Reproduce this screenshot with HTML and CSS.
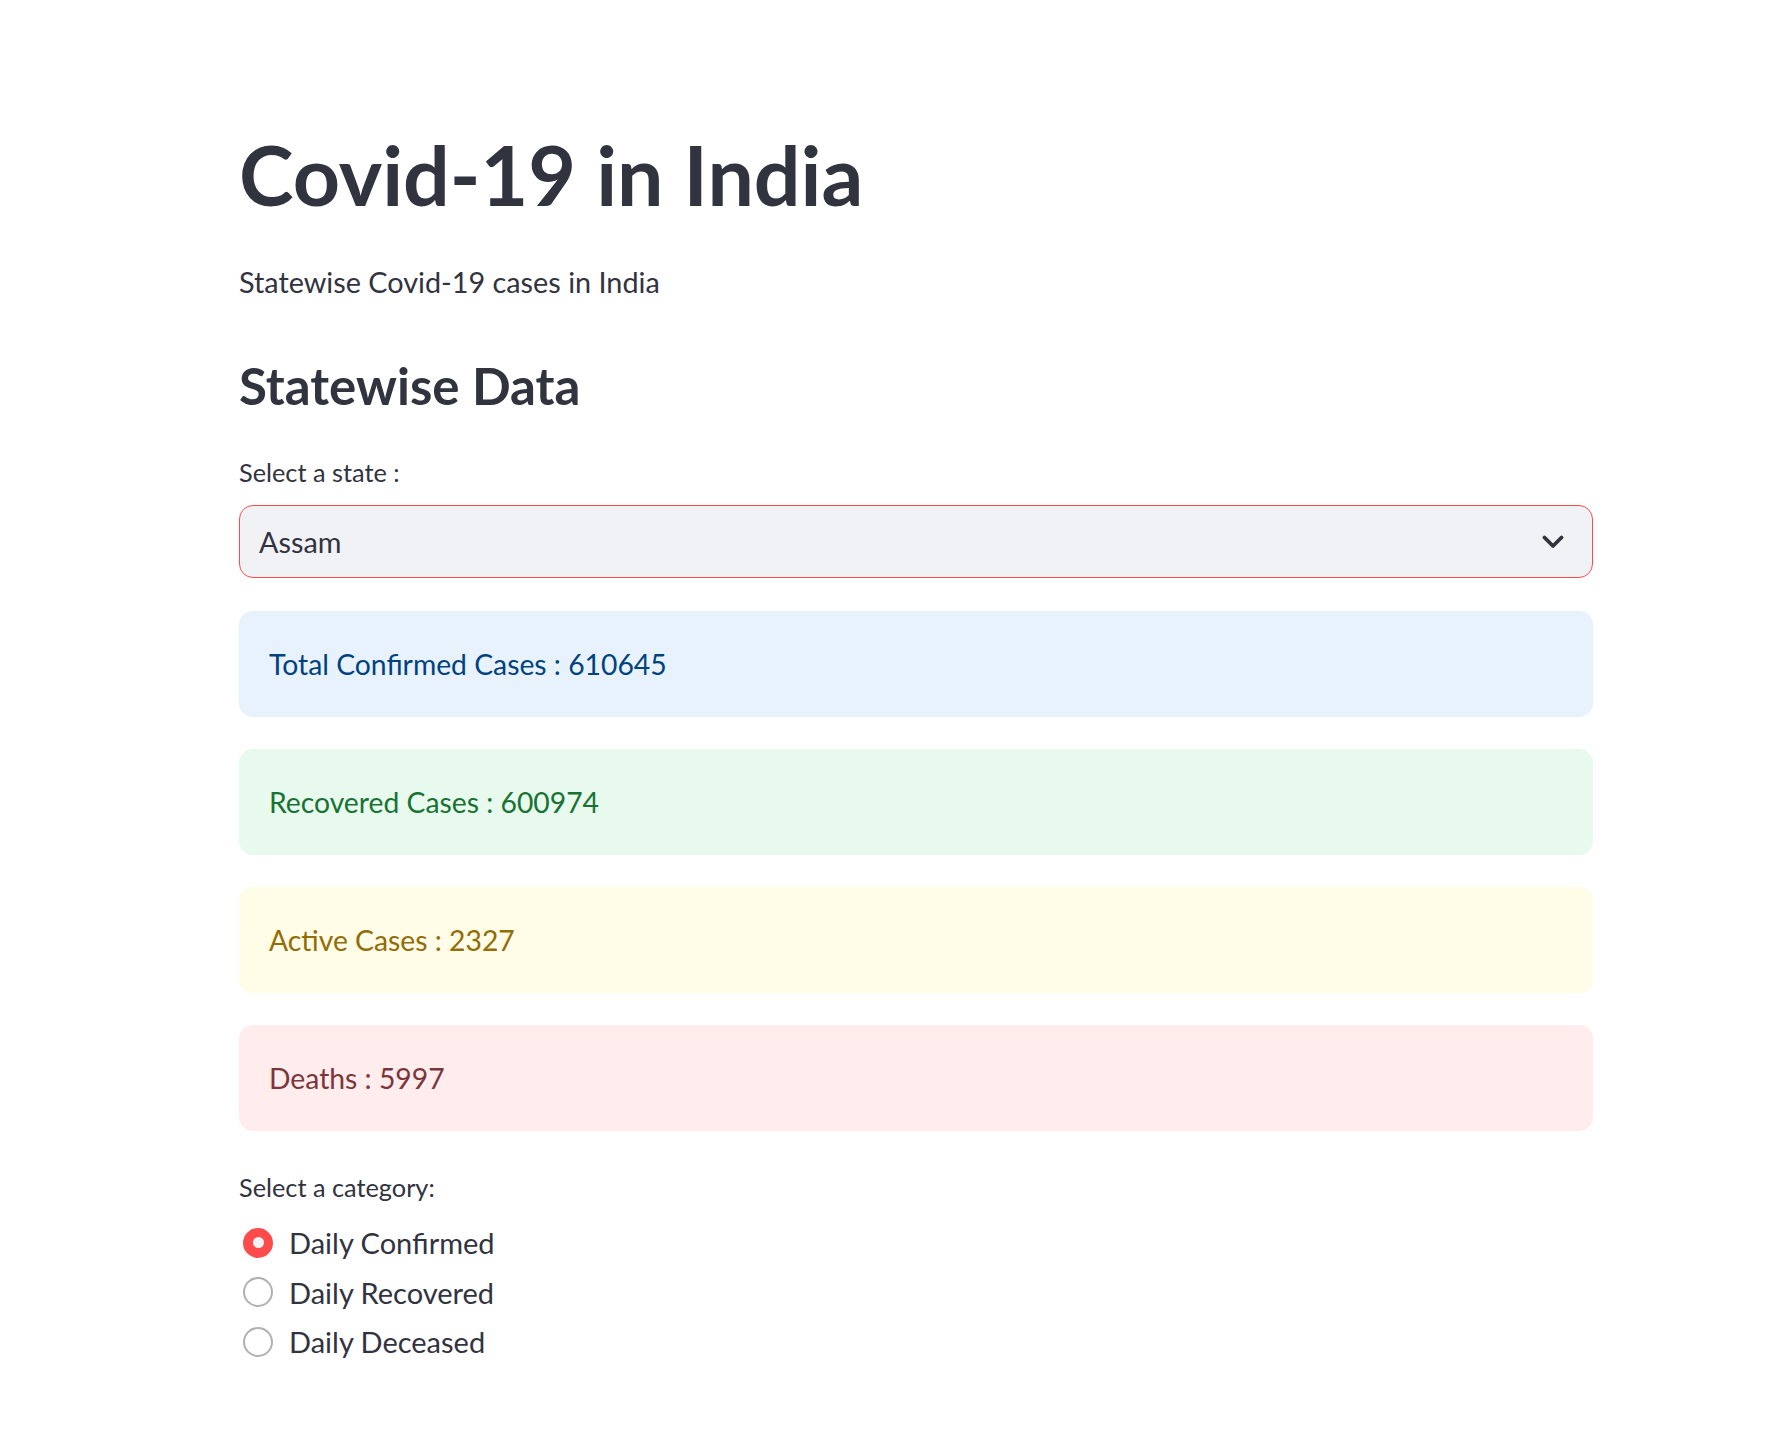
FILE: index.html
```html
<!DOCTYPE html>
<html lang="en">
<head>
<meta charset="utf-8">
<title>Covid-19 in India</title>
<link rel="stylesheet" href="styles.css">
</head>
<body>
<main class="main">
  <h1 class="title">Covid-19 in India</h1>
  <p class="subtitle">Statewise Covid-19 cases in India</p>
  <h2 class="header">Statewise Data</h2>
  <div class="label label-state">Select a state :</div>
  <div class="select">
    <span class="select-value">Assam</span>
    <svg class="chevron" width="22" height="14" viewBox="0 0 22 14" aria-hidden="true">
      <path d="M2.5 2.5 L11 11 L19.5 2.5" fill="none" stroke="#31333F" stroke-width="3.8" stroke-linecap="round" stroke-linejoin="round"/>
    </svg>
  </div>
  <div class="alert alert-info alert-first">Total Confirmed Cases : 610645</div>
  <div class="alert alert-success">Recovered Cases : 600974</div>
  <div class="alert alert-warning">Active Cases : 2327</div>
  <div class="alert alert-error">Deaths : 5997</div>
  <div class="label label-category">Select a category:</div>
  <div class="radios">
    <div class="radio-row"><span class="radio radio-on"><span class="radio-dot"></span></span><span class="radio-label">Daily Confirmed</span></div>
    <div class="radio-row"><span class="radio"></span><span class="radio-label">Daily Recovered</span></div>
    <div class="radio-row"><span class="radio"></span><span class="radio-label">Daily Deceased</span></div>
  </div>
</main>
</body>
</html>
```

FILE: styles.css
```css
* { box-sizing: border-box; }
html, body { margin: 0; padding: 0; background: #ffffff; }
body {
  font-family: Lato, "Noto Sans", "Liberation Sans", sans-serif;
  color: #31333F;
}
.main {
  width: 1354px;
  margin-left: 239px;
  padding-top: 125px;
  display: flex;
  flex-direction: column;
}
.title {
  margin: 0;
  font-size: 82.4px;
  line-height: 100px;
  font-weight: 700;
  height: 100px;
}
.subtitle {
  margin: 34px 0 0 0;
  font-size: 28.8px;
  line-height: 47px;
  height: 47px;
}
.header {
  margin: 40px 0 0 0;
  font-size: 51px;
  line-height: 80px;
  height: 80px;
  font-weight: 700;
}
.label {
  font-size: 25.3px;
  line-height: 40px;
  height: 40px;
}
.label-state { margin-top: 26px; }
.select {
  margin-top: 13px;
  height: 73px;
  background: #F0F2F6;
  border: 1px solid #FF4B4B;
  border-radius: 14px;
  display: flex;
  align-items: center;
  justify-content: space-between;
  padding: 0 28px 0 19px;
}
.select-value { font-size: 28.8px; }
.chevron { display: block; }
.alert {
  margin-top: 32px;
  height: 106px;
  border-radius: 14px;
  padding: 0 30px;
  display: flex;
  align-items: center;
  font-size: 28.3px;
}
.alert-first { margin-top: 33px; }
.alert-info { background: #E8F2FC; color: #004280; }
.alert-success { background: #E8F9EE; color: #177233; }
.alert-warning { background: #FFFCE7; color: #926C05; }
.alert-error { background: #FFECEC; color: #7D353B; }
.label-category { margin-top: 36px; }
.radios { display: flex; flex-direction: column; margin-top: 11px; }
.radio-row {
  height: 49.5px;
  display: flex;
  align-items: center;
  gap: 16px;
  padding-left: 4px;
}
.radio {
  width: 30px;
  height: 30px;
  border-radius: 50%;
  border: 2px solid #B0B0B6;
  display: flex;
  align-items: center;
  justify-content: center;
  flex: none;
}
.radio-on { background: #FF4B4B; border-color: #FF4B4B; }
.radio-dot { width: 11px; height: 11px; border-radius: 50%; background: #F0F2F6; }
.radio-label { font-size: 29px; }
```
